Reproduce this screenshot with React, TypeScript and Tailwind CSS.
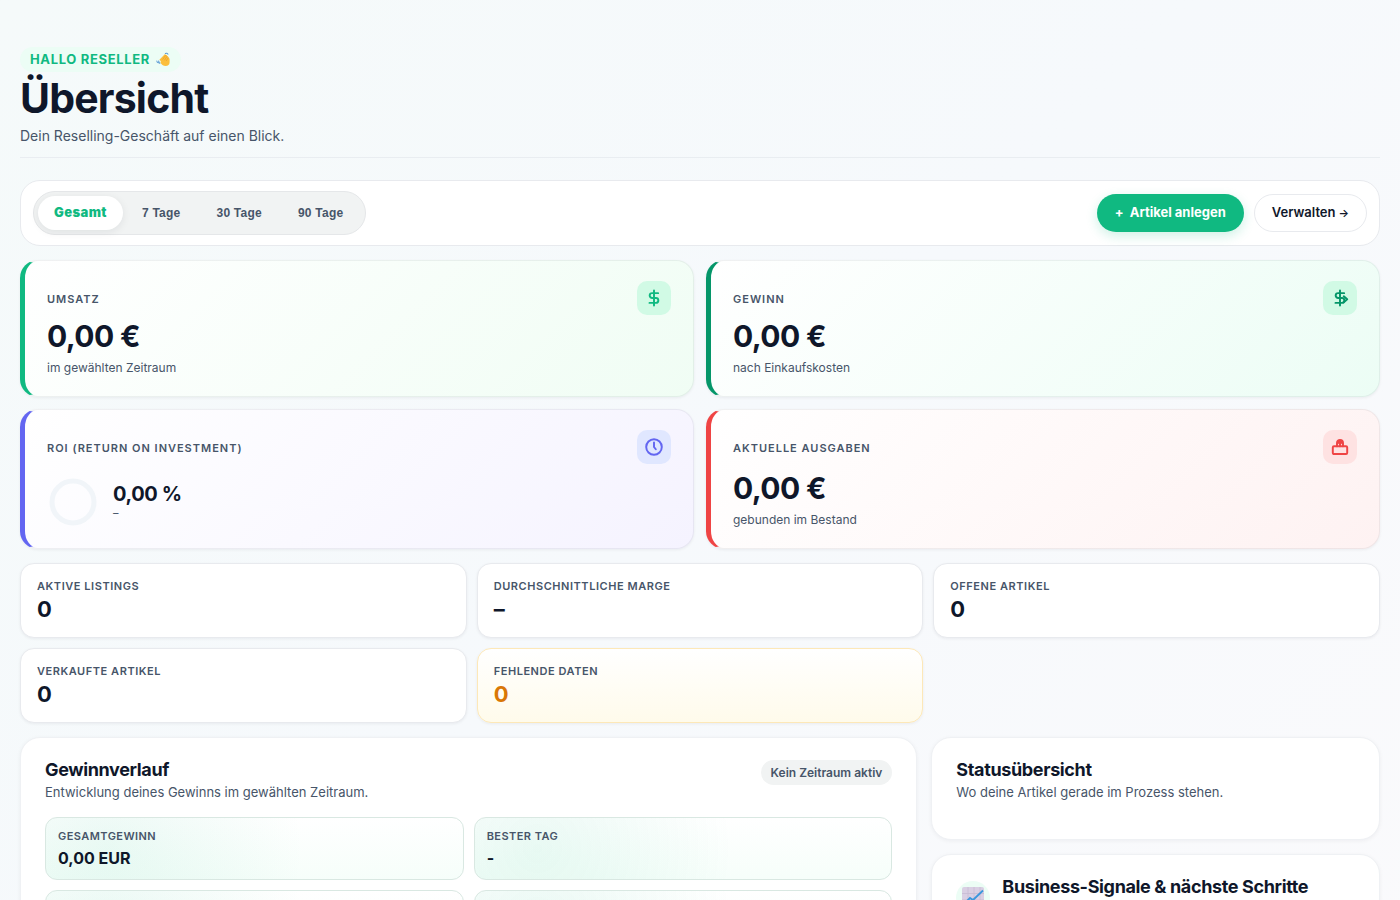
import type { ReactNode } from "react";

function Svg({ children, className }: { children: ReactNode; className: string }) {
  return (
    <svg viewBox="0 0 24 24" fill="none" stroke="currentColor" strokeWidth="2.6" strokeLinecap="round" strokeLinejoin="round" className={className} aria-hidden="true">
      {children}
    </svg>
  );
}

const dollarPath = "M12 2v20M17.500 5.500H9.500a3.200 3.200 0 0 0 0 6.500h5a3.200 3.200 0 0 1 0 6.500H6";

function DollarIcon() {
  return (
    <Svg className="size-[18px]">
      <path d={dollarPath} />
    </Svg>
  );
}

function ProfitIcon() {
  return (
    <Svg className="size-[18px]">
      <path d={dollarPath} />
      <path d="M17 9.800l4.600 4L17 17.800" />
    </Svg>
  );
}

function ClockIcon() {
  return (
    <Svg className="size-[18px]">
      <circle cx="12" cy="12" r="10.4" />
      <path d="M12 6v6l2.400 3" />
    </Svg>
  );
}

function SpendIcon() {
  return (
    <Svg className="size-[18px]">
      <rect x="2.4" y="11" width="19.2" height="10.4" rx="1.6" />
      <path d="M8 11V6.500a4 4 0 0 1 8 0V11M12 3v8M9 7l3-3 3 3" />
    </Svg>
  );
}

function WaveIcon() {
  return (
    <svg viewBox="0 0 16 16" className="size-[15px]" aria-hidden="true">
      <path d="M4.400 7.400 8.800 2.800c.7-.7 1.700-.2 1.500.7.800-.6 1.800.1 1.500 1.100.9-.2 1.600.5 1.300 1.400.9.100 1.400.9 1.400 1.800v3.200c0 2.700-1.700 4-4.200 4-2.300 0-4.100-1.200-5.300-3.200-.6-1 0-1.800.9-1.500L3.900 8.600c-.3-.5 0-.9.5-1.200z" fill="#fbbf3c" />
      <path d="m7.300 7.700 3-4.200M9.200 8.500l2.600-3.900M11 9.200l2.100-3.200" stroke="#e69a28" strokeWidth=".7" fill="none" strokeLinecap="round" />
      <path d="M10 1.600c1-.7 2.200-.3 2.800.7M.9 9.600c.1 1 .7 1.700 1.500 2M2.800 9.500c.1 1.100.6 2.100 1.300 2.700" stroke="#5b9bd5" strokeWidth="1.100" fill="none" strokeLinecap="round" />
    </svg>
  );
}

function ChartIcon() {
  return (
    <svg viewBox="0 0 22 22" className="size-[22px]" aria-hidden="true">
      <rect x="0" y="0" width="22" height="22" rx="2" fill="#d9cfe3" />
      <path d="M0 6.500h22M0 13h22M6 0v22M12 0v22M18 0v22" stroke="#c6bbd3" strokeWidth=".8" />
      <path d="M4 15l4-4 3 2L21 3.500" stroke="#3b97dd" strokeWidth="1.800" fill="none" />
    </svg>
  );
}

const labelText = "text-[11px] font-semibold uppercase text-[#475569]";

type KpiProps = {
  label: string;
  accent: string;
  iconBox: string;
  icon: ReactNode;
  children: ReactNode;
};

function KpiCard({ label, accent, iconBox, icon, children }: KpiProps) {
  return (
    <article className={`flex flex-col justify-between rounded-[18px] border border-l-[5px] border-[#0f172a]/6 bg-origin-border px-[22px] py-5 shadow-[0_1px_3px_rgba(15,23,42,0.06)] ${accent}`}>
      <div className="flex h-[34px] items-center justify-between">
        <h2 className={`${labelText} pt-0.5 tracking-[0.09em]`}>{label}</h2>
        <span className={`flex size-[34px] items-center justify-center rounded-[10px] ${iconBox}`}>{icon}</span>
      </div>
      {children}
    </article>
  );
}

function KpiValue({ value, hint }: { value: string; hint: string }) {
  return (
    <div className="mt-[5px]">
      <p className="text-[30px] leading-8 font-bold tracking-[-0.02em]">{value}</p>
      <p className="mt-2 text-xs leading-4 text-[#475569]">{hint}</p>
    </div>
  );
}

function CountCard({ label, value, warn = false }: { label: string; value: string; warn?: boolean }) {
  return (
    <article
      className={`rounded-[14px] border px-4 py-3.5 shadow-[0_1px_3px_rgba(15,23,42,0.06)] ${
        warn ? "border-[#fde8b8] bg-linear-to-b from-white to-[#fffbeb]" : "border-[#e8eaee] bg-white"
      }`}
    >
      <h3 className={`${labelText} leading-4 tracking-[0.05em]`}>{label}</h3>
      <p className={`mt-0.5 text-[22px] leading-[27px] font-bold ${warn ? "text-[#d97706]" : ""}`}>{value}</p>
    </article>
  );
}

const tile =
  "min-h-[63px] rounded-xl border border-[#d9e8e2] bg-[radial-gradient(circle_at_15%_50%,rgba(16,185,129,0.08),transparent_55%),linear-gradient(180deg,#ffffff,#f6fefa)] px-3 py-2.5";

function ProfitTile({ label, value }: { label: string; value: string }) {
  return (
    <div className={tile}>
      <h3 className={`${labelText} leading-4 tracking-[0.04em]`}>{label}</h3>
      <p className="mt-1 text-base leading-[21px] font-bold">{value}</p>
    </div>
  );
}

const panel = "rounded-[20px] border border-[#eff1f4] bg-white px-6 shadow-[0_1px_4px_rgba(15,23,42,0.05)]";
const heading = "text-lg leading-6 font-bold tracking-[-0.02em]";
const rangeButton = "h-[34px] rounded-full px-[18px] font-['Liberation_Sans',sans-serif] text-xs font-bold tracking-[0.02em]";

export default function App() {
  return (
    <main className="min-h-screen bg-linear-135 from-[#f5fafa] via-[#f6f9fc] to-[#fafafc] px-5 pt-[47px] font-['Inter',sans-serif] text-[#0f172a]">
      <header className="border-b border-[#e9edf1] pb-2.5">
        <p className="flex h-[25px] w-fit items-center gap-1.5 rounded-full bg-[#ecfdf5] px-2.5 text-[13px] font-bold uppercase tracking-[0.05em] text-[#10b981]">
          Hallo Reseller <WaveIcon />
        </p>
        <h1 className="mt-[3px] text-[41px] leading-[46px] font-bold tracking-[-0.02em]">Übersicht</h1>
        <p className="mt-1 text-sm leading-[22px] text-[#475569]">Dein Reselling-Geschäft auf einen Blick.</p>
      </header>

      <section className="mt-[22px] flex items-center justify-between rounded-[20px] border border-[#e8eaee] bg-white px-3 py-2.5">
        <div className="flex h-11 items-center rounded-full border border-[#e5e7e9] bg-[#f1f3f3] px-1 text-[#475569]">
          <button type="button" aria-pressed="true" className="mr-px h-[34px] rounded-full bg-white px-4 text-[13px] font-black tracking-[0.03em] text-[#10b981] shadow-[0_2px_8px_rgba(15,23,42,0.08)]">
            Gesamt
          </button>
          <button type="button" className={rangeButton}>7 Tage</button>
          <button type="button" className={rangeButton}>30 Tage</button>
          <button type="button" className={rangeButton}>90 Tage</button>
        </div>
        <div className="flex gap-2.5 text-[13px]">
          <button type="button" className="flex h-[38px] items-center gap-1.5 rounded-full bg-[#10b981] px-[18px] font-bold text-white shadow-[0_4px_12px_rgba(16,185,129,0.2)]">
            <span>+</span>
            <span>Artikel anlegen</span>
          </button>
          <a href="#verwalten" className="flex h-[38px] items-center gap-[3px] rounded-full border border-[#e8eaee] bg-white px-[17px] font-semibold">
            <span>Verwalten</span>
            <span className="text-[11px]">→</span>
          </a>
        </div>
      </section>

      <section className="mt-3.5 grid grid-cols-2 gap-3">
        <KpiCard label="Umsatz" accent="border-l-[#10b981] bg-linear-135 from-white to-[#f0fdf4]" iconBox="bg-[#d1fae5] text-[#10b981]" icon={<DollarIcon />}>
          <KpiValue value="0,00 €" hint="im gewählten Zeitraum" />
        </KpiCard>
        <KpiCard label="Gewinn" accent="border-l-[#059669] bg-linear-135 from-white to-[#ecfdf5]" iconBox="bg-[#d1fae5] text-[#059669]" icon={<ProfitIcon />}>
          <KpiValue value="0,00 €" hint="nach Einkaufskosten" />
        </KpiCard>
        <KpiCard label="ROI (Return on Investment)" accent="border-l-[#6366f1] bg-linear-135 from-white to-[#f5f3ff]" iconBox="bg-[#e0e7ff] text-[#6366f1]" icon={<ClockIcon />}>
          <div className="mt-3 flex items-center gap-3.5">
            <svg viewBox="0 0 52 52" className="size-[52px]" role="img" aria-label="0 %">
              <circle cx="26" cy="26" r="21" fill="none" stroke="#f1f5f9" strokeWidth="5" />
            </svg>
            <div className="pb-0.5">
              <p className="text-xl leading-6 font-bold tracking-[-0.02em]">0,00 %</p>
              <p className="text-[11px] leading-[14px] text-[#475569]">–</p>
            </div>
          </div>
        </KpiCard>
        <KpiCard label="Aktuelle Ausgaben" accent="border-l-[#ef4444] bg-linear-135 from-white to-[#fef2f2]" iconBox="bg-[#fee2e2] text-[#ef4444]" icon={<SpendIcon />}>
          <KpiValue value="0,00 €" hint="gebunden im Bestand" />
        </KpiCard>
      </section>

      <section className="mt-3.5 grid grid-cols-3 gap-2.5">
        <CountCard label="Aktive Listings" value="0" />
        <CountCard label="Durchschnittliche Marge" value="–" />
        <CountCard label="Offene Artikel" value="0" />
        <CountCard label="Verkaufte Artikel" value="0" />
        <CountCard label="Fehlende Daten" value="0" warn />
      </section>

      <div className="mt-3.5 grid grid-cols-[2fr_1fr] items-start gap-3.5">
        <section className={`${panel} py-5`}>
          <div className="flex items-start justify-between">
            <div>
              <h2 className={heading}>Gewinnverlauf</h2>
              <p className="text-[13px] leading-5 text-[#475569]">Entwicklung deines Gewinns im gewählten Zeitraum.</p>
            </div>
            <span className="mt-0.5 flex h-[25px] items-center rounded-full bg-[#f1f3f3] px-2.5 text-xs font-semibold text-[#475569]">Kein Zeitraum aktiv</span>
          </div>
          <div className="mt-[15px] grid grid-cols-2 gap-2.5">
            <ProfitTile label="Gesamtgewinn" value="0,00 EUR" />
            <ProfitTile label="Bester Tag" value="-" />
            <div className={tile} />
            <div className={tile} />
          </div>
        </section>
        <div className="flex flex-col gap-3.5">
          <section className={`${panel} pt-5 pb-[37px]`}>
            <h2 className={heading}>Statusübersicht</h2>
            <p className="text-[13px] leading-5 text-[#475569]">Wo deine Artikel gerade im Prozess stehen.</p>
          </section>
          <section className={`${panel} flex items-start gap-3 py-5`}>
            <span className="mt-1.5 flex size-[34px] shrink-0 items-center justify-center rounded-full bg-[#ecfdf5]">
              <ChartIcon />
            </span>
            <h2 className={heading}>Business-Signale &amp; nächste Schritte</h2>
          </section>
        </div>
      </div>
    </main>
  );
}
